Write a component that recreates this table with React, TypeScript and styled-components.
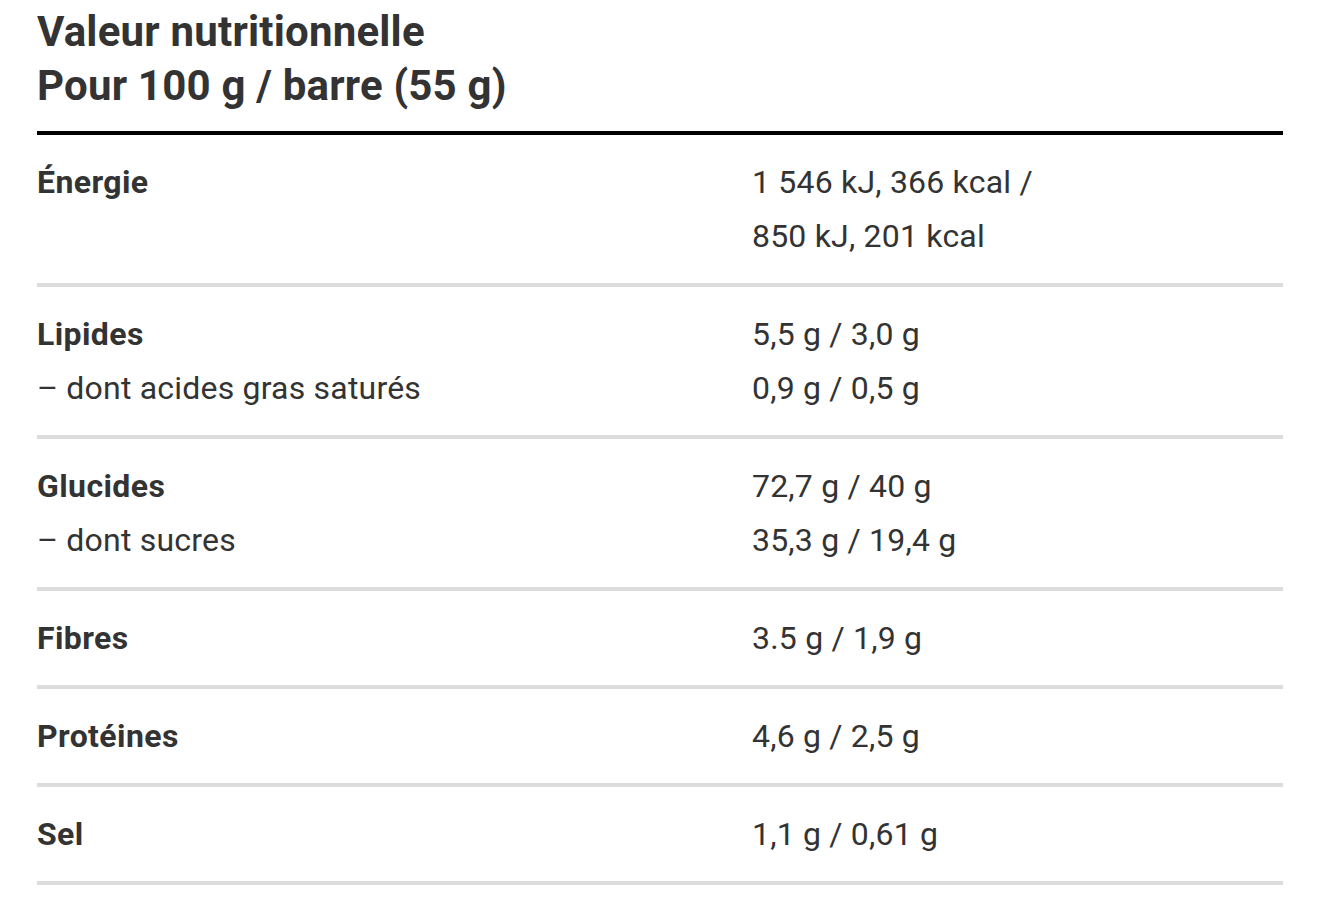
import React from "react";
import styled, { createGlobalStyle } from "styled-components";

const Global = createGlobalStyle`
  html, body { margin: 0; padding: 0; background: #fff; }
  body { font-family: Roboto, "Liberation Sans", sans-serif; color: #333; }
`;

const Wrapper = styled.div`
  padding: 5px 37px 0 37px;
  width: 1246px;
`;

const Title = styled.h2`
  margin: 0;
  font-size: 42px;
  line-height: 54px;
  font-weight: 700;
  color: #333;
  letter-spacing: 0.2px;
  padding-bottom: 18px;
  border-bottom: 4px solid #000;
`;

const Row = styled.div`
  display: grid;
  grid-template-columns: 715px 1fr;
  padding: 20px 0;
  border-bottom: 4px solid #dcdcdc;
`;

const Cell = styled.div`
  font-size: 32px;
  line-height: 54px;
  display: flex;
  flex-direction: column;
`;

const Label = styled.span<{ $bold?: boolean }>`
  font-weight: ${(p) => (p.$bold ? 700 : 400)};
  letter-spacing: ${(p) => (p.$bold ? "0.4px" : "0.2px")};
  color: #333;
`;

type Item = { labels: [string, boolean][]; values: string[] };

const rows: Item[] = [
  { labels: [["Énergie", true]], values: ["1 546 kJ, 366 kcal /", "850 kJ, 201 kcal"] },
  {
    labels: [
      ["Lipides", true],
      ["– dont acides gras saturés", false],
    ],
    values: ["5,5 g / 3,0 g", "0,9 g / 0,5 g"],
  },
  {
    labels: [
      ["Glucides", true],
      ["– dont sucres", false],
    ],
    values: ["72,7 g / 40 g", "35,3 g / 19,4 g"],
  },
  { labels: [["Fibres", true]], values: ["3.5 g / 1,9 g"] },
  { labels: [["Protéines", true]], values: ["4,6 g / 2,5 g"] },
  { labels: [["Sel", true]], values: ["1,1 g / 0,61 g"] },
];

export default function App() {
  return (
    <>
      <Global />
      <Wrapper>
        <Title>
          Valeur nutritionnelle
          <br />
          Pour 100 g / barre (55 g)
        </Title>
        {rows.map((r, i) => (
          <Row key={i}>
            <Cell>
              {r.labels.map(([t, b], j) => (
                <Label key={j} $bold={b}>
                  {t}
                </Label>
              ))}
            </Cell>
            <Cell>
              {r.values.map((v, j) => (
                <Label key={j}>{v}</Label>
              ))}
            </Cell>
          </Row>
        ))}
      </Wrapper>
    </>
  );
}
